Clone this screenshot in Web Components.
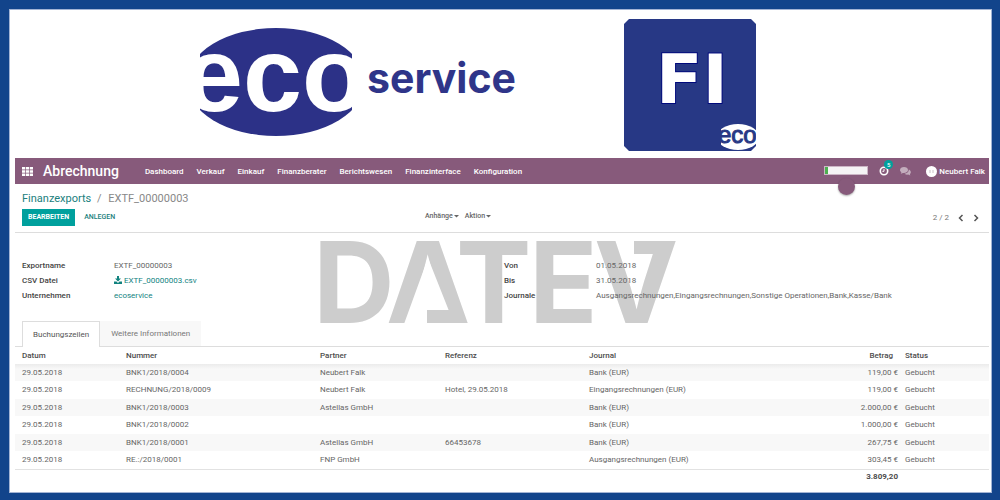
<!DOCTYPE html>
<html lang="de">
<head>
<meta charset="utf-8">
<meta name="viewport" content="width=device-width, initial-scale=1">
<title>Abrechnung – EXTF_00000003</title>
<style>
  body { margin: 0; font-family: Roboto, "Liberation Sans", sans-serif; font-size: 8px; line-height: 15px; color: #666; background: #12448b; }
</style>
</head>
<body>
<page-frame>
  <brand-header></brand-header>
  <app-shell>
    <nav-bar slot="nav" heading="Abrechnung" user="Neubert Falk" count="5">
      <a href="#dashboard">Dashboard</a>
      <a href="#verkauf">Verkauf</a>
      <a href="#einkauf">Einkauf</a>
      <a href="#finanzberater">Finanzberater</a>
      <a href="#berichtswesen">Berichtswesen</a>
      <a href="#finanzinterface">Finanzinterface</a>
      <a href="#konfiguration">Konfiguration</a>
    </nav-bar>
    <control-panel slot="control">
      <a slot="parent" href="#finanzexports">Finanzexports</a>
      <span slot="current">EXTF_00000003</span>
      <span slot="pager">2 / 2</span>
    </control-panel>
    <export-form></export-form>
    <tab-strip></tab-strip>
    <booking-table></booking-table>
  </app-shell>
</page-frame>

<script>
const define = (name, html, setup) => {
  const template = document.createElement('template');
  template.innerHTML = html;
  customElements.define(name, class extends HTMLElement {
    constructor() {
      super();
      this.attachShadow({ mode: 'open' }).append(template.content.cloneNode(true));
    }
    connectedCallback() { if (setup) setup(this, this.shadowRoot); }
  });
};

define('page-frame', `
<style>
  :host { display: block; box-sizing: border-box; min-height: 100vh; padding: 9px 8px 7px 9px; background: #12448b; }
  main { display: block; box-sizing: border-box; min-height: calc(100vh - 16px); background: #fff; border: 1px solid #a3b4d4; padding: 0 2px 8px 5px; }
</style>
<main><slot></slot></main>`);

define('brand-header', `
<style>
  :host { display: flex; justify-content: center; align-items: flex-start; gap: 106px; padding: 9px 50px 7px 0; }
  svg { display: block; flex: none; }
</style>
<svg width="320" height="132" viewBox="198 19 320 132" role="img" aria-label="ecoservice">
  <defs><clipPath id="oval"><rect x="200" y="20" width="152" height="120"/></clipPath></defs>
  <g clip-path="url(#oval)">
    <ellipse cx="276" cy="82" rx="89" ry="54" fill="#2c3187"/>
    <text x="184" y="111" font-family="Liberation Sans, sans-serif" font-weight="700" font-size="106" fill="#fff">eco</text>
  </g>
  <text x="367" y="93" font-family="Inter, sans-serif" font-weight="700" font-size="41" fill="#2f3589">service</text>
</svg>
<svg width="133" height="132" viewBox="624 19 133 132" role="img" aria-label="FI eco">
  <defs><clipPath id="badge"><rect x="721" y="120" width="35" height="30"/></clipPath></defs>
  <path d="M629 19H751L756 24V146L751 151H629L624 146V24Z" fill="#273885"/>
  <text x="656" y="103" font-family="DejaVu Sans, sans-serif" font-weight="700" font-size="68" fill="#fff" stroke="#00097c" stroke-width="2" paint-order="stroke">FI</text>
  <g clip-path="url(#badge)">
    <ellipse cx="738" cy="137" rx="21" ry="13" fill="#fff"/>
    <text x="718" y="143" font-family="Liberation Sans, sans-serif" font-size="24" fill="#273885" stroke="#273885" stroke-width="1">eco</text>
  </g>
</svg>`);

define('app-shell', `
<style>
  :host { display: block; position: relative; }
  .watermark { position: absolute; top: 82px; left: 304px; pointer-events: none; }
  .body { position: relative; }
</style>
<slot name="nav"></slot>
<slot name="control"></slot>
<svg class="watermark" width="360" height="84" viewBox="319 240 360 84" role="img" aria-label="DATEV">
  <g fill="#cdcdcd">
    <text x="313 386 456 529 594" y="323" font-family="Inter, sans-serif" font-weight="700" font-size="113">DATEV</text>
    <path d="M428 258L449 311H426V324H404Z" fill="#fff"/>
    <path d="M427 310H455L460 323H427Z"/>
    <path d="M634 241H674L669 254H634Z"/>
  </g>
</svg>
<div class="body"><slot></slot></div>`);

define('nav-bar', `
<style>
  :host { display: flex; align-items: center; position: relative; height: 26px; padding: 0 4px 0 7px; background: #875a7b; color: #fff; font-weight: 500; box-sizing: border-box; }
  .apps { display: block; width: 11px; height: 9px; padding: 0; border: 0; background: none; color: inherit; }
  svg { display: block; }
  h1 { margin: 0 26px 0 10px; font-size: 14px; line-height: 20px; font-weight: 500; }
  nav { display: flex; gap: 13px; flex: 1; }
  ::slotted(a) { color: #fff; text-decoration: none; }
  .meter { width: 42px; height: 7px; margin-bottom: 2px; border: 1px solid #cbb5c5; background: linear-gradient(90deg, #4caf50 3px, #f5f3f5 3px); }
  .clock { position: relative; margin-left: 11px; }
  .count { position: absolute; left: 5px; top: -6px; width: 9px; height: 9px; border-radius: 50%; background: #00a09d; font-size: 6px; line-height: 9px; text-align: center; }
  .chat { margin-left: 11px; }
  .avatar { margin: 0 2px 0 15px; }
  .knob { position: absolute; right: 134px; top: 20px; width: 17px; height: 17px; border-radius: 50%; background: #875a7b; box-shadow: 0 1px 2px #0005; }
</style>
<button class="apps" aria-label="Apps"><svg width="11" height="9" viewBox="0 0 11 9" fill="#fff"><path d="M0 0h3.200v2.500H0zM3.900 0h3.200v2.500H3.900zM7.800 0H11v2.500H7.800zM0 3.200h3.200v2.500H0zM3.900 3.200h3.200v2.500H3.900zM7.800 3.200H11v2.500H7.800zM0 6.400h3.200v2.500H0zM3.900 6.400h3.200v2.500H3.900zM7.800 6.400H11v2.500H7.800z"/></svg></button>
<h1></h1>
<nav><slot></slot></nav>
<div class="knob"></div>
<div class="meter" role="progressbar" aria-label="Fortschritt" aria-valuenow="5"></div>
<div class="clock"><svg width="10" height="10" viewBox="0 0 10 10" fill="none" stroke="#fff"><circle cx="5" cy="5" r="3.700" stroke-width="1.600"/><path d="M5 3v2.300H3.400" stroke-width="1"/></svg><span class="count"></span></div>
<svg class="chat" width="11" height="9" viewBox="0 0 11 9" fill="#c3adbd"><path d="M4 0C1.800 0 0 1.300 0 3c0 1 .6 1.800 1.400 2.300L.8 6.700 3 5.900C5.900 6.200 8 4.800 8 3S6.200 0 4 0z"/><path d="M8.800 2.500C9 4.800 7 6.500 4.600 6.700 5.500 7.500 6.900 7.800 8.200 7.600L10.300 8.600 9.800 7.200C11.300 6.100 11.400 3.700 8.800 2.500z"/></svg>
<svg class="avatar" width="11" height="11" viewBox="0 0 11 11"><circle cx="5.500" cy="5.500" r="5.500" fill="#fff"/><path d="M3 4h2v3H3zM6 4h2v3H6z" fill="#e4dfe3"/></svg>
<span class="user"></span>`, (host, root) => {
  root.querySelector('h1').textContent = host.getAttribute('heading');
  root.querySelector('.user').textContent = host.getAttribute('user');
  root.querySelector('.count').textContent = host.getAttribute('count');
});

define('control-panel', `
<style>
  :host { display: block; padding: 7px; height: 49px; box-sizing: border-box; border-bottom: 1px solid #ddd; }
  .crumbs { font-size: 11px; line-height: 16px; color: #888; }
  ::slotted(a) { color: #21807d; text-decoration: none; }
  .sep { margin: 0 4px 0 3px; }
  .row { display: grid; grid-template-columns: 403px 1fr auto; align-items: start; padding-top: 2px; font-size: 7px; }
  button { font: inherit; border: 0; background: none; padding: 0; color: #666; line-height: 17px; }
  .actions { display: flex; gap: 9px; }
  .primary { background: #00a09d; color: #fff; font-weight: 700; padding: 0 6px; }
  .plain { color: #21807d; font-weight: 500; }
  .menus { display: flex; gap: 6px; }
  .menus button { display: flex; align-items: center; gap: 1px; line-height: 15px; font-weight: 500; }
  .pager { display: flex; align-items: center; font-size: 8px; line-height: 17px; color: #777; padding-right: 3px; }
  .pager button { margin-left: 9px; }
  svg { display: block; }
</style>
<div class="crumbs"><slot name="parent"></slot> <span class="sep">/</span> <slot name="current"></slot></div>
<div class="row">
  <div class="actions"><button class="primary">BEARBEITEN</button><button class="plain">ANLEGEN</button></div>
  <div class="menus">
    <button>Anhänge <svg width="5" height="3" viewBox="0 0 5 3"><path d="M0 0H5L2.500 2.500Z" fill="#666"/></svg></button>
    <button>Aktion <svg width="5" height="3" viewBox="0 0 5 3"><path d="M0 0H5L2.500 2.500Z" fill="#666"/></svg></button>
  </div>
  <div class="pager"><slot name="pager"></slot>
    <button aria-label="Zurück"><svg width="6" height="8" viewBox="0 0 6 8"><path d="M4.500 1L1.500 4L4.500 7" fill="none" stroke="#555" stroke-width="1.500"/></svg></button>
    <button aria-label="Weiter"><svg width="6" height="8" viewBox="0 0 6 8"><path d="M1.500 1L4.500 4L1.500 7" fill="none" stroke="#555" stroke-width="1.500"/></svg></button>
  </div>
</div>`);

define('export-form', `
<style>
  :host { display: grid; grid-template-columns: 1fr 1fr; column-gap: 4px; padding: 25px 7px 18px; }
  dl { display: grid; grid-template-columns: 92px 1fr; margin: 0; align-content: start; }
  dt { color: #444; font-weight: 500; }
  dd { margin: 0; white-space: nowrap; }
  a { color: #12837f; text-decoration: none; }
  svg { vertical-align: -1px; }
</style>
<dl>
  <dt>Exportname</dt><dd>EXTF_00000003</dd>
  <dt>CSV Datei</dt><dd><a href="#csv"><svg width="8" height="8" viewBox="0 0 8 8" fill="#12837f"><path d="M3 0H5V2.500H7L4 5.500L1 2.500H3ZM0 5.500H2.500L4 7L5.500 5.500H8V8H0Z"/></svg> EXTF_00000003.csv</a></dd>
  <dt>Unternehmen</dt><dd><a href="#ecoservice">ecoservice</a></dd>
</dl>
<dl>
  <dt>Von</dt><dd>01.05.2018</dd>
  <dt>Bis</dt><dd>31.05.2018</dd>
  <dt>Journale</dt><dd>Ausgangsrechnungen,Eingangsrechnungen,Sonstige Operationen,Bank,Kasse/Bank</dd>
</dl>`);

define('tab-strip', `
<style>
  :host { display: flex; padding-left: 7px; border-bottom: 1px solid #ddd; }
  button { font: inherit; line-height: 24px; padding: 0 10px; border: 1px solid #f8f8f8; border-bottom: 0; background: #f8f8f8; color: #777; }
  .on { background: #fff; color: #555; border-color: #ddd; margin-bottom: -1px; }
</style>
<button class="on" role="tab" aria-selected="true">Buchungszeilen</button>
<button role="tab" aria-selected="false">Weitere Informationen</button>`);

define('booking-table', `
<style>
  :host { display: block; }
  table { width: 100%; border-collapse: collapse; table-layout: fixed; }
  th, td { padding: 0 0 0 7px; text-align: left; line-height: 17px; white-space: nowrap; }
  th { color: #4c4c4c; font-weight: 500; }
  tbody tr:nth-child(odd) { background: #f8f8f8; }
  tbody tr:nth-child(even) td { line-height: 18px; }
  tbody tr:first-child { background: linear-gradient(#ebebeb, #f8f8f8 5px); }
  .num { text-align: right; }
  th.num { padding-right: 5px; }
  tfoot td { line-height: 15px; font-weight: 700; color: #4c4c4c; box-shadow: inset 0 1px #e2e2e2; }
  .date { width: 97px; } .number { width: 187px; } .partner { width: 118px; } .ref { width: 137px; }
  .sum { width: 60px; } .state { width: 84px; }
</style>
<table>
  <thead><tr><th class="date">Datum</th><th class="number">Nummer</th><th class="partner">Partner</th><th class="ref">Referenz</th><th>Journal</th><th class="sum num">Betrag</th><th class="state">Status</th></tr></thead>
  <tbody></tbody>
  <tfoot><tr><td colspan="5"></td><td class="num">3.809,20</td><td></td></tr></tfoot>
</table>`, (host, root) => {
  const rows = [
    ['BNK1/2018/0004', 'Neubert Falk', '', 'Bank (EUR)', '119,00 €'],
    ['RECHNUNG/2018/0009', 'Neubert Falk', 'Hotel, 29.05.2018', 'Eingangsrechnungen (EUR)', '119,00 €'],
    ['BNK1/2018/0003', 'Astellas GmbH', '', 'Bank (EUR)', '2.000,00 €'],
    ['BNK1/2018/0002', '', '', 'Bank (EUR)', '1.000,00 €'],
    ['BNK1/2018/0001', 'Astellas GmbH', '66453678', 'Bank (EUR)', '267,75 €'],
    ['RE.:/2018/0001', 'FNP GmbH', '', 'Ausgangsrechnungen (EUR)', '303,45 €'],
  ];
  const body = root.querySelector('tbody');
  body.replaceChildren();
  for (const row of rows) {
    const tr = body.insertRow();
    ['29.05.2018', ...row, 'Gebucht'].forEach((value, i) => {
      const cell = tr.insertCell();
      cell.textContent = value;
      if (i === 5) cell.className = 'num';
    });
  }
});
</script>
</body>
</html>
